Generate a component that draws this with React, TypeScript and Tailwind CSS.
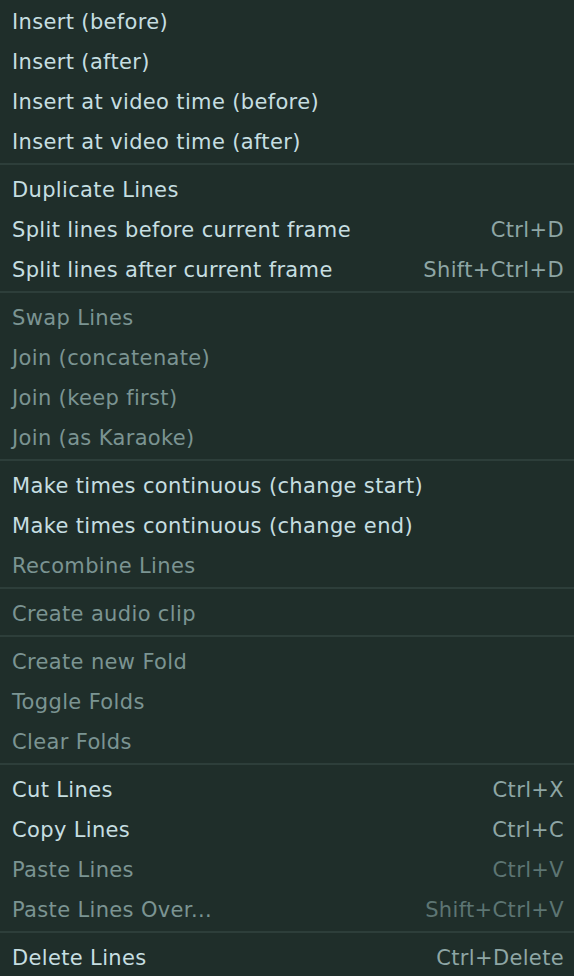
import React from 'react';

type Item = { label: string; shortcut?: string; disabled?: boolean } | 'sep';

const items: Item[] = [
  { label: 'Insert (before)' },
  { label: 'Insert (after)' },
  { label: 'Insert at video time (before)' },
  { label: 'Insert at video time (after)' },
  'sep',
  { label: 'Duplicate Lines' },
  { label: 'Split lines before current frame', shortcut: 'Ctrl+D' },
  { label: 'Split lines after current frame', shortcut: 'Shift+Ctrl+D' },
  'sep',
  { label: 'Swap Lines', disabled: true },
  { label: 'Join (concatenate)', disabled: true },
  { label: 'Join (keep first)', disabled: true },
  { label: 'Join (as Karaoke)', disabled: true },
  'sep',
  { label: 'Make times continuous (change start)' },
  { label: 'Make times continuous (change end)' },
  { label: 'Recombine Lines', disabled: true },
  'sep',
  { label: 'Create audio clip', disabled: true },
  'sep',
  { label: 'Create new Fold', disabled: true },
  { label: 'Toggle Folds', disabled: true },
  { label: 'Clear Folds', disabled: true },
  'sep',
  { label: 'Cut Lines', shortcut: 'Ctrl+X' },
  { label: 'Copy Lines', shortcut: 'Ctrl+C' },
  { label: 'Paste Lines', shortcut: 'Ctrl+V', disabled: true },
  { label: 'Paste Lines Over...', shortcut: 'Shift+Ctrl+V', disabled: true },
  'sep',
  { label: 'Delete Lines', shortcut: 'Ctrl+Delete' },
];

export default function App() {
  return (
    <div className="w-[574px] h-[976px] overflow-hidden bg-[#1f2e2a] font-[family-name:'DejaVu_Sans',sans-serif] text-[21px] tracking-[0.35px]">
      {items.map((it, i) =>
        it === 'sep' ? (
          <div key={i} className="h-2 flex items-center">
            <div className="h-[2px] w-full bg-[#2d3e3a]" />
          </div>
        ) : (
          <div key={i} className="h-10 flex items-center justify-between pl-3 pr-[10px] pt-[5px]">
            <span className={it.disabled ? 'text-[#7b9492]' : 'text-[#c6dee1]'}>{it.label}</span>
            {it.shortcut && (
              <span className={it.disabled ? 'text-[#5d7573]' : 'text-[#8ea6a5]'}>{it.shortcut}</span>
            )}
          </div>
        )
      )}
    </div>
  );
}
